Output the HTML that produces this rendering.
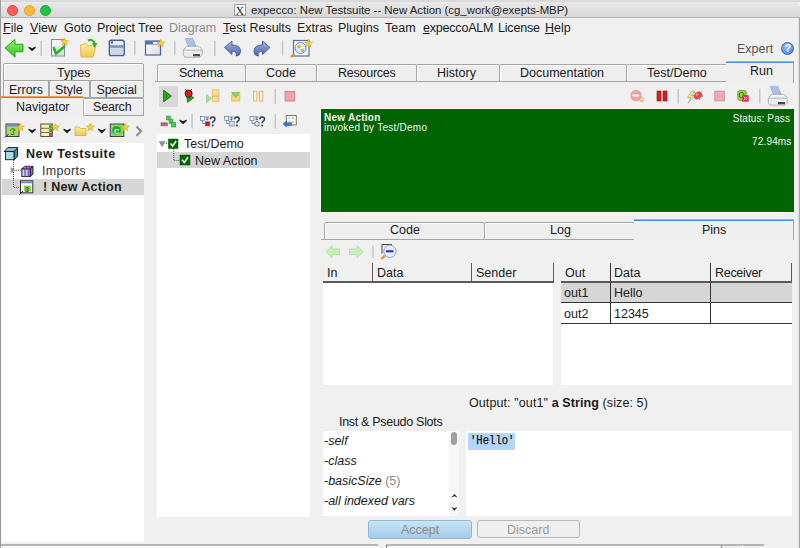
<!DOCTYPE html>
<html><head><meta charset="utf-8">
<style>
*{box-sizing:border-box;margin:0;padding:0}
html,body{width:800px;height:548px;overflow:hidden;background:#f0f0f0;font-family:"Liberation Sans",sans-serif;color:#1a1a1a}
.a{position:absolute}
.t{position:absolute;white-space:pre;line-height:1;font-size:12.5px}
.tab{position:absolute;background:#eeeeee;border:1px solid #a4a4a4;box-shadow:inset 1px 1px 0 #fff;border-radius:2px 2px 0 0}
.w{position:absolute;background:#fff}
svg{position:absolute;overflow:visible}
</style></head><body>
<!-- desktop strip -->
<div class="a" style="left:0;top:0;width:800px;height:2px;background:#dadada"></div>
<div class="a" style="left:0;top:0;width:1px;height:548px;background:#9c9c9c"></div>
<!-- title bar -->
<div class="a" style="left:1px;top:2px;width:799px;height:16px;background:linear-gradient(#e9e9e9,#d7d7d7);border-bottom:1px solid #b4b4b4;border-radius:5px 5px 0 0"></div>
<div class="a" style="left:7px;top:4.5px;width:11px;height:11px;border-radius:50%;background:#fd5c57;border:0.5px solid #e0443e"></div>
<div class="a" style="left:24px;top:4.5px;width:11px;height:11px;border-radius:50%;background:#feb935;border:0.5px solid #dea123"></div>
<div class="a" style="left:40px;top:4.5px;width:11px;height:11px;border-radius:50%;background:#1fc547;border:0.5px solid #1aab29"></div>
<div class="a" style="left:234px;top:4px;width:12px;height:12px;background:#fafafa;border:1px solid #a0a0a0"></div>
<div class="t" style="left:235.5px;top:4.5px;font-size:12px;font-family:'Liberation Serif',serif;color:#333">X</div>
<div class="t" style="left:251px;top:5px;font-size:11.4px;color:#222">expecco: New Testsuite -- New Action (cg_work@exepts-MBP)</div>

<!-- menu bar -->
<div class="t" style="left:3px;top:22px"><u>F</u>ile</div>
<div class="t" style="left:30px;top:22px"><u>V</u>iew</div>
<div class="t" style="left:64px;top:22px">Goto</div>
<div class="t" style="left:97px;top:22px;letter-spacing:-0.15px">Project Tree</div>
<div class="t" style="left:169px;top:22px;color:#8a8a8a">Diagram</div>
<div class="t" style="left:223px;top:22px"><u>T</u>est Results</div>
<div class="t" style="left:297px;top:22px">Extras</div>
<div class="t" style="left:338px;top:22px">Plugins</div>
<div class="t" style="left:385px;top:22px">Team</div>
<div class="t" style="left:423px;top:22px;letter-spacing:-0.2px"><u>e</u>xpeccoALM</div>
<div class="t" style="left:498px;top:22px;letter-spacing:-0.2px">License</div>
<div class="t" style="left:545px;top:22px"><u>H</u>elp</div>

<div class="t" style="left:737px;top:43px;color:#555">Expert</div>
<div class="a" style="left:781px;top:42px;width:13px;height:13px;border-radius:50%;background:radial-gradient(circle at 40% 35%,#9cc0f8,#3d74d8);border:0.5px solid #3366cc"></div>
<div class="t" style="left:784.5px;top:43px;font-size:11px;font-weight:bold;color:#fff">?</div>

<!-- left panel tabs -->
<div class="tab" style="left:3px;top:63px;width:141px;height:18px"></div>
<div class="t" style="left:57px;top:67px">Types</div>
<div class="tab" style="left:3px;top:80px;width:46px;height:18px"></div>
<div class="t" style="left:9px;top:84px">Errors</div>
<div class="tab" style="left:49px;top:80px;width:41px;height:18px"></div>
<div class="t" style="left:55px;top:84px">Style</div>
<div class="tab" style="left:90px;top:80px;width:54px;height:18px"></div>
<div class="t" style="left:96.5px;top:84px;letter-spacing:-0.1px">Special</div>
<div class="tab" style="left:83px;top:98px;width:61px;height:18px;border-left-color:#b0b0b0"></div>
<div class="t" style="left:93px;top:101px;letter-spacing:-0.2px">Search</div>
<div class="a" style="left:1px;top:96px;width:82px;height:21px;background:#efefef;border-top:1px solid #f4a050"></div>
<div class="a" style="left:1px;top:97px;width:82px;height:1px;background:#4a90d9"></div>
<div class="t" style="left:16px;top:101px">Navigator</div>

<!-- left white list -->
<div class="w" style="left:2px;top:143px;width:142px;height:399px"></div>
<div class="a" style="left:2px;top:179px;width:142px;height:16px;background:#d6d6d6"></div>
<div class="t" style="left:26px;top:148px;font-weight:bold;letter-spacing:0.5px">New Testsuite</div>
<div class="t" style="left:42px;top:165px;color:#333;letter-spacing:0.3px">Imports</div>
<div class="t" style="left:43px;top:181px;font-weight:bold;letter-spacing:0.3px">! New Action</div>

<!-- right tabs -->
<div class="a" style="left:155px;top:81px;width:571px;height:1px;background:#a4a4a4"></div>
<div class="tab" style="left:157px;top:64px;width:89px;height:18px"></div>
<div class="t" style="left:179px;top:67px;letter-spacing:-0.3px">Schema</div>
<div class="tab" style="left:245px;top:64px;width:72px;height:18px"></div>
<div class="t" style="left:266px;top:67px">Code</div>
<div class="tab" style="left:316px;top:64px;width:101px;height:18px"></div>
<div class="t" style="left:338px;top:67px;letter-spacing:-0.25px">Resources</div>
<div class="tab" style="left:416px;top:64px;width:84px;height:18px"></div>
<div class="t" style="left:437px;top:67px">History</div>
<div class="tab" style="left:499px;top:64px;width:128px;height:18px"></div>
<div class="t" style="left:520px;top:67px">Documentation</div>
<div class="tab" style="left:626px;top:64px;width:101px;height:18px"></div>
<div class="t" style="left:647px;top:67px">Test/Demo</div>
<div class="a" style="left:726px;top:61px;width:68px;height:22px;background:#efefef;border-top:1px solid #f4a050;border-right:1px solid #a4a4a4"></div>
<div class="a" style="left:726px;top:62px;width:67px;height:1px;background:#4a90d9"></div>
<div class="t" style="left:750px;top:65px">Run</div>

<!-- run button highlight -->
<div class="a" style="left:159px;top:86px;width:19px;height:21px;background:#d9d9d9"></div>

<!-- middle tree -->
<div class="w" style="left:157px;top:134px;width:153px;height:383px"></div>
<div class="a" style="left:157px;top:152px;width:153px;height:16px;background:#d6d6d6"></div>
<div class="t" style="left:184px;top:138px">Test/Demo</div>
<div class="t" style="left:195px;top:155px">New Action</div>

<!-- green panel -->
<div class="a" style="left:320px;top:108px;width:476px;height:105px;background:#fafafa"></div>
<div class="a" style="left:321px;top:109px;width:473px;height:103px;background:#006400"></div>
<div class="a" style="left:794px;top:108px;width:2px;height:104px;background:#f8f8f8"></div>
<div class="t" style="left:324px;top:113px;font-size:10px;font-weight:bold;color:#f4f8f4;letter-spacing:0.25px">New Action</div>
<div class="t" style="left:324px;top:123px;font-size:10px;color:#f4f8f4;letter-spacing:0.25px">invoked by Test/Demo</div>
<div class="t" style="right:10px;top:113.5px;font-size:10px;color:#f4f8f4;letter-spacing:0.1px">Status: Pass</div>
<div class="t" style="right:8.5px;top:137px;font-size:10px;color:#f4f8f4;letter-spacing:0.15px">72.94ms</div>

<!-- code/log/pins tabs -->
<div class="a" style="left:321px;top:239px;width:313px;height:1px;background:#a4a4a4"></div>
<div class="tab" style="left:324px;top:222px;width:161px;height:18px"></div>
<div class="t" style="left:390px;top:224px">Code</div>
<div class="tab" style="left:484px;top:222px;width:151px;height:18px"></div>
<div class="t" style="left:550px;top:224px">Log</div>
<div class="a" style="left:634px;top:219px;width:160px;height:21px;background:#efefef;border-top:1px solid #f4a050;border-right:1px solid #a4a4a4"></div>
<div class="a" style="left:634px;top:220px;width:159px;height:1px;background:#4a90d9"></div>
<div class="t" style="left:702px;top:224px">Pins</div>

<!-- in table -->
<div class="w" style="left:323px;top:281px;width:230px;height:104px"></div>
<div class="a" style="left:323px;top:281px;width:231px;height:2px;background:#5a5a5a"></div>
<div class="a" style="left:372px;top:263px;width:1px;height:18px;background:#5a5a5a"></div>
<div class="a" style="left:471px;top:263px;width:1px;height:18px;background:#5a5a5a"></div>
<div class="a" style="left:553px;top:263px;width:1px;height:18px;background:#5a5a5a"></div>
<div class="t" style="left:327px;top:267px">In</div>
<div class="t" style="left:377px;top:267px">Data</div>
<div class="t" style="left:476px;top:267px">Sender</div>

<!-- out table -->
<div class="w" style="left:561px;top:281px;width:231px;height:104px"></div>
<div class="a" style="left:561px;top:283px;width:231px;height:19px;background:#d6d6d6"></div>
<div class="a" style="left:561px;top:281px;width:231px;height:2px;background:#5a5a5a"></div>
<div class="a" style="left:561px;top:302px;width:231px;height:1px;background:#333"></div>
<div class="a" style="left:561px;top:323px;width:231px;height:1px;background:#333"></div>
<div class="a" style="left:610px;top:263px;width:1px;height:61px;background:#333"></div>
<div class="a" style="left:710px;top:263px;width:1px;height:61px;background:#333"></div>
<div class="a" style="left:791px;top:263px;width:1px;height:18px;background:#5a5a5a"></div>
<div class="t" style="left:565px;top:267px">Out</div>
<div class="t" style="left:614px;top:267px">Data</div>
<div class="t" style="left:715px;top:267px;letter-spacing:-0.3px">Receiver</div>
<div class="t" style="left:564px;top:287px">out1</div>
<div class="t" style="left:614px;top:287px">Hello</div>
<div class="t" style="left:564px;top:308px">out2</div>
<div class="t" style="left:614px;top:308px">12345</div>

<!-- output -->
<div class="t" style="left:469px;top:397px;letter-spacing:0.1px">Output: "out1" <b>a String</b> (size: 5)</div>
<div class="t" style="left:339px;top:416px;letter-spacing:-0.3px">Inst &amp; Pseudo Slots</div>
<div class="w" style="left:323px;top:431px;width:136px;height:85px"></div>
<div class="a" style="left:450.5px;top:431.5px;width:6.5px;height:13px;border-radius:3px;background:#a0a0a0"></div>
<div class="t" style="left:324px;top:435px;font-style:italic">-self</div>
<div class="t" style="left:324px;top:455px;font-style:italic">-class</div>
<div class="t" style="left:324px;top:475px;font-style:italic">-basicSize <span style="font-style:normal;color:#888">(5)</span></div>
<div class="t" style="left:324px;top:495px;font-style:italic">-all indexed vars</div>
<div class="w" style="left:466px;top:431px;width:326px;height:85px"></div>
<div class="a" style="left:468px;top:433px;width:47px;height:17px;background:#b4d6fc"></div>
<div class="t" style="left:469.5px;top:435.3px;font-size:12.3px;-webkit-text-stroke:0.25px #111;transform:scaleX(0.86);transform-origin:0 0;font-family:'Liberation Mono',monospace;color:#111">'Hello'</div>
<div class="a" style="left:449px;top:431px;width:10px;height:85px;background:#f7f7f7"></div>
<div class="a" style="left:450.5px;top:431.5px;width:6.5px;height:13px;border-radius:3px;background:#a0a0a0"></div>
<svg width="20" height="30" style="left:440px;top:490px"><path d="M11.3,7.4 L14.4,4 L17.5,7.4 L14.4,6.3 Z" fill="#222"/><path d="M11.3,17 L14.4,20.8 L17.5,17 L14.4,18.3 Z" fill="#222"/></svg>

<!-- buttons -->
<div class="a" style="left:368px;top:520px;width:104px;height:19px;border-radius:3px;background:linear-gradient(#c8e5f4,#a4cbec);border:1px solid #8fb7d8"></div>
<div class="t" style="left:401px;top:524px;color:#8a8a8a">Accept</div>
<div class="a" style="left:477px;top:520px;width:103px;height:18px;border-radius:3px;background:#efefef;border:1px solid #b8b8b8"></div>
<div class="t" style="left:507px;top:524px;color:#9a9a9a">Discard</div>

<!-- bottom strip -->
<div class="a" style="left:1px;top:544px;width:377px;height:2px;background:#b4b4b4"></div>
<div class="a" style="left:386px;top:544px;width:378px;height:2px;background:#b4b4b4"></div>
<div class="a" style="left:1px;top:546px;width:377px;height:2px;background:#fafafa"></div>
<div class="a" style="left:387px;top:546px;width:334px;height:2px;background:#fafafa"></div>
<div class="a" style="left:386px;top:545px;width:1px;height:3px;background:#777"></div>
<div class="a" style="left:721px;top:545px;width:1px;height:3px;background:#888"></div>
<div class="a" style="left:742px;top:545px;width:1px;height:3px;background:#fff"></div>
<!-- right window border -->
<div class="a" style="left:798px;top:18px;width:1px;height:530px;background:#dedede"></div>
<div class="a" style="left:799px;top:18px;width:1px;height:530px;background:#a8a8a8"></div>
<svg width="800" height="548" style="left:0;top:0" viewBox="0 0 800 548">
<defs>
<linearGradient id="gA" x1="0" y1="0" x2="0" y2="1"><stop offset="0" stop-color="#8ef27a"/><stop offset="1" stop-color="#2fc21a"/></linearGradient>
<linearGradient id="gBlue" x1="0" y1="0" x2="0" y2="1"><stop offset="0" stop-color="#9fb3e0"/><stop offset="1" stop-color="#4d67ad"/></linearGradient>
<linearGradient id="gFold" x1="0" y1="0" x2="0" y2="1"><stop offset="0" stop-color="#fff2a0"/><stop offset="1" stop-color="#f0c850"/></linearGradient>
<linearGradient id="gPage" x1="0" y1="0" x2="1" y2="1"><stop offset="0" stop-color="#ffffff"/><stop offset="1" stop-color="#d8dbe6"/></linearGradient>
<linearGradient id="gPrint" x1="0" y1="0" x2="0" y2="1"><stop offset="0" stop-color="#f4f4f4"/><stop offset="1" stop-color="#b8b8b8"/></linearGradient>


</defs>
<!-- ==== main toolbar ==== -->
<path d="M5,48 L15,39.5 L15,44.3 L23,44.3 L23,51.7 L15,51.7 L15,57 Z" fill="url(#gA)" stroke="#1fa70f" stroke-width="1"/>
<g transform="translate(28.8,46.5)"><path d="M-0.3,0 L3.3,1.7 L6.9,0 L6.9,1.4 L3.3,4.8 L-0.3,1.4 Z" fill="#1a1a1a"/></g>
<rect x="40.5" y="41" width="1.5" height="15" fill="#c6c6c6"/>
<rect x="51.5" y="39.5" width="13" height="16.5" fill="url(#gPage)" stroke="#7d8aa5" stroke-width="1"/>
<path d="M53.5,47 L56,53.5 L65,46" fill="none" stroke="#22b81a" stroke-width="2.6"/>
<g transform="translate(64.5,41.8)"><path d="M0,-4 L1.1,-1.3 L3.9,-1.2 L1.7,0.6 L2.4,3.4 L0,1.8 L-2.4,3.4 L-1.7,0.6 L-3.9,-1.2 L-1.1,-1.3Z" fill="#f7d23c" stroke="#d9a520" stroke-width="0.6"/></g>
<path d="M80.5,45 L86,43.5 L88,46 L96,45.5 L93,57 L81,57 Z" fill="url(#gFold)" stroke="#d8a830" stroke-width="0.8"/>
<path d="M88,40.5 Q93,38.5 95,44" fill="none" stroke="#3cb02c" stroke-width="2.2"/>
<path d="M92,43 L97.5,43 L94.5,48 Z" fill="#3cb02c"/>
<rect x="109.4" y="40.3" width="14.8" height="15.2" rx="1.8" fill="#e6eaf4" stroke="#4d5f9f" stroke-width="1.5"/>
<rect x="110.2" y="45.2" width="13.2" height="2.6" fill="#7f8fc2"/>
<rect x="110.5" y="48" width="12.6" height="6.5" fill="#d0d8ea"/>
<rect x="111" y="41.5" width="2" height="1.8" fill="#3b4f98"/>
<rect x="134" y="41" width="1.5" height="14.5" fill="#c6c6c6"/>
<rect x="145.5" y="41" width="15" height="14" fill="url(#gPage)" stroke="#4d62a6" stroke-width="1.2"/>
<rect x="145.5" y="41" width="15" height="3.5" fill="#5a70b0"/>
<rect x="153" y="42" width="5" height="1.8" fill="#fff"/>
<g transform="translate(160.8,43.3)"><path d="M0,-4 L1.1,-1.3 L3.9,-1.2 L1.7,0.6 L2.4,3.4 L0,1.8 L-2.4,3.4 L-1.7,0.6 L-3.9,-1.2 L-1.1,-1.3Z" fill="#f7d23c" stroke="#d9a520" stroke-width="0.6"/></g>
<rect x="174" y="40.5" width="1.5" height="15" fill="#c6c6c6"/>
<g transform="translate(-585,-48)">
<path d="M770.2,86.4 L777.8,86.4 L781,94 L773.6,94.8 Z" fill="#a9c0ee" stroke="#8aa2d6" stroke-width="0.6"/>
<path d="M768.3,98 L771.5,94.3 L784,94.3 L787.2,97.5 L787.2,103 L785,105.2 L770,105.2 L768.3,103 Z" fill="#ececec" stroke="#9a9a9a" stroke-width="0.7"/>
<path d="M768.6,98.2 L787,98.2" stroke="#b0b0b0" stroke-width="0.8"/>
<path d="M771.5,95.8 L784,95.8" stroke="#ffffff" stroke-width="1"/>
<rect x="778" y="102" width="7" height="2.3" fill="#4a4a4a"/>
</g>
<rect x="214" y="41" width="1.5" height="15" fill="#c6c6c6"/>
<path d="M224.5,47.5 L232,41 L232,45 Q241,45 240.5,52 Q240,56 236,56 Q238,52 232,51 L232,54.5 Z" fill="url(#gBlue)" stroke="#3d508f" stroke-width="0.8"/>
<path d="M270,47.5 L262.5,41 L262.5,45 Q253.5,45 254,52 Q254.5,56 258.5,56 Q256.5,52 262.5,51 L262.5,54.5 Z" fill="url(#gBlue)" stroke="#3d508f" stroke-width="0.8"/>
<rect x="281.8" y="40.5" width="1.5" height="15" fill="#c6c6c6"/>
<rect x="293.5" y="40.5" width="15.5" height="15.5" fill="#f4f6fb" stroke="#5a6ea8" stroke-width="1.2"/>
<circle cx="300.5" cy="48" r="5.5" fill="#d6eefa" stroke="#6e8cc4" stroke-width="1"/>
<rect x="297.5" y="45" width="3" height="3" fill="#f0b800"/>
<rect x="301" y="49" width="3" height="3" fill="#f0b800"/>
<path d="M291,57 L294.5,53.5" stroke="#f08a20" stroke-width="2.2"/>
<g transform="translate(308.5,43.3)"><path d="M0,-4 L1.1,-1.3 L3.9,-1.2 L1.7,0.6 L2.4,3.4 L0,1.8 L-2.4,3.4 L-1.7,0.6 L-3.9,-1.2 L-1.1,-1.3Z" fill="#f7d23c" stroke="#d9a520" stroke-width="0.6"/></g>
<!-- ==== run toolbar ==== -->
<path d="M163.5,90 L171.5,96 L163.5,102 Z" fill="#30a020" stroke="#1c6d14" stroke-width="0.8"/>
<path d="M186.5,95 L194,97.5 L187.5,102.5 Z" fill="#2a9a1e" stroke="#1c6d14" stroke-width="0.7"/>
<circle cx="188.6" cy="93.6" r="3.6" fill="#e01818" stroke="#222" stroke-width="0.8"/>
<path d="M185,89 L187,91 M192,89 L190,91" stroke="#222" stroke-width="0.8"/>
<path d="M206.5,94.5 L211.5,98.5 L206.5,102.8 Z" fill="#a8e090" stroke="#80c070" stroke-width="0.6"/>
<rect x="212.5" y="89.8" width="6.4" height="5.3" fill="#ffe08a" stroke="#e0a868" stroke-width="0.7"/>
<rect x="212.5" y="96.2" width="6.4" height="5.3" fill="#ffe08a" stroke="#e0a868" stroke-width="0.7"/>
<rect x="231.8" y="95" width="8" height="6" fill="#ffd880" stroke="#d8a860" stroke-width="0.7"/>
<path d="M231.5,92.4 L240,92.4 L235.8,97.5 Z" fill="#80d860" stroke="#60b040" stroke-width="0.6"/>
<rect x="253.5" y="91.2" width="3.4" height="9.8" fill="#fff4c8" stroke="#e0a060" stroke-width="0.8"/>
<rect x="259.4" y="91.2" width="3.4" height="9.8" fill="#fff4c8" stroke="#e0a060" stroke-width="0.8"/>
<rect x="274.5" y="89" width="1.5" height="15" fill="#c6c6c6"/>
<rect x="285" y="91.5" width="9.8" height="9.5" fill="#f2a2ac" stroke="#c08890" stroke-width="0.9"/>
<!-- right run icons -->
<circle cx="636" cy="95.5" r="5.4" fill="#f2a0a0" stroke="#e89090" stroke-width="0.5"/>
<rect x="632.5" y="94.5" width="6.5" height="2" fill="#fff"/>
<path d="M639.5,98.3 L641.8,96.5 L644.1,98.3 Z M639.5,100.3 L641.8,102.1 L644.1,100.3 Z" fill="#e0d090" stroke="#b8a860" stroke-width="0.5"/>
<rect x="657" y="91" width="4" height="10" fill="#d42020" stroke="#901010" stroke-width="0.6"/>
<rect x="663" y="91" width="4" height="10" fill="#d42020" stroke="#901010" stroke-width="0.6"/>
<rect x="677.5" y="89" width="1.5" height="14.5" fill="#c6c6c6"/>
<path d="M692,91 L687.5,97.5 L691,97.5 L688,103 L695,95.5 L691.5,95.5 L694.5,91 Z" fill="#f8ec80" stroke="#a0a060" stroke-width="0.6"/>
<path d="M694,92 L696,93.5 M701.5,91.5 L700,93 M703,96 L701.5,96 M695,99.5 L696.5,98 M700,100 L699.5,98.5" stroke="#707070" stroke-width="0.8"/>
<ellipse cx="698" cy="95.5" rx="4.2" ry="3.2" transform="rotate(-35 698 95.5)" fill="#e84a4a" stroke="#9a5050" stroke-width="0.6"/>
<ellipse cx="697" cy="94.5" rx="1.5" ry="1" fill="#f8a0a0"/>
<rect x="714.8" y="91.3" width="9.5" height="9.5" fill="#f6a6ae" stroke="#c0a0a4" stroke-width="1.1"/>
<rect x="737.8" y="90.6" width="8.5" height="9.8" rx="2" fill="#8ad848" stroke="#58a028" stroke-width="0.8"/>
<circle cx="741.5" cy="95" r="2.5" fill="none" stroke="#3a7018" stroke-width="1"/>
<rect x="742.2" y="95.2" width="6.5" height="6.5" fill="#e03030"/>
<path d="M743.8,96.8 L747.2,100.2 M747.2,96.8 L743.8,100.2" stroke="#fff" stroke-width="1"/>
<rect x="759" y="88.7" width="1.5" height="14.7" fill="#c6c6c6"/>
<g>
<path d="M770.2,86.4 L777.8,86.4 L781,94 L773.6,94.8 Z" fill="#a9c0ee" stroke="#8aa2d6" stroke-width="0.6"/>
<path d="M768.3,98 L771.5,94.3 L784,94.3 L787.2,97.5 L787.2,103 L785,105.2 L770,105.2 L768.3,103 Z" fill="#ececec" stroke="#9a9a9a" stroke-width="0.7"/>
<path d="M768.6,98.2 L787,98.2" stroke="#b0b0b0" stroke-width="0.8"/>
<path d="M771.5,95.8 L784,95.8" stroke="#ffffff" stroke-width="1"/>
<rect x="778" y="102" width="7" height="2.3" fill="#4a4a4a"/>
</g>
<!-- ==== middle tree toolbar ==== -->
<rect x="161" y="122.8" width="6.4" height="3" fill="#e05050" stroke="#606890" stroke-width="0.6"/>
<rect x="166.5" y="116" width="4" height="4" fill="#40d040" stroke="#308830" stroke-width="0.5"/>
<rect x="169" y="119.3" width="4" height="4" fill="#40d040" stroke="#308830" stroke-width="0.5"/>
<rect x="171.3" y="122.5" width="4.5" height="4.5" fill="#40d040" stroke="#308830" stroke-width="0.5"/>
<g transform="translate(179.8,119.5)"><path d="M-0.3,0 L3.3,1.7 L6.9,0 L6.9,1.4 L3.3,4.8 L-0.3,1.4 Z" fill="#1a1a1a"/></g>
<rect x="191.3" y="114" width="1.5" height="14.5" fill="#c6c6c6"/>
<g>
<rect x="200.5" y="116.3" width="4" height="4" fill="#fff" stroke="#5070a0" stroke-width="0.7"/>
<path d="M202.5,120.5 L202.5,123.5 L205,123.5" fill="none" stroke="#5070a0" stroke-width="0.7"/>
<path d="M205.5,117 L209,117 M207.2,117.5 L207.2,120 M205.8,118.8 L207.2,120.2 L208.6,118.8" fill="none" stroke="#405080" stroke-width="0.8"/>
<path d="M210.4,119.3 Q210.4,116.9 212.7,116.9 Q215,116.9 215,119.1 Q215,120.6 213.4,121.4 Q212.7,121.8 212.7,123.3" fill="none" stroke="#2a3a5a" stroke-width="1.5"/><rect x="211.9" y="124.6" width="1.7" height="1.8" fill="#2a3a5a"/>
</g>
<rect x="205" y="121.5" width="5" height="4.5" fill="#e01010" stroke="#a0a0b0" stroke-width="0.6"/>
<g transform="translate(24.2,0)">
<rect x="200.5" y="116.3" width="4" height="4" fill="#fff" stroke="#5070a0" stroke-width="0.7"/>
<path d="M202.5,120.5 L202.5,123.5 L205,123.5" fill="none" stroke="#5070a0" stroke-width="0.7"/>
<path d="M205.5,117 L209,117 M207.2,117.5 L207.2,120 M205.8,118.8 L207.2,120.2 L208.6,118.8" fill="none" stroke="#405080" stroke-width="0.8"/>
<path d="M210.4,119.3 Q210.4,116.9 212.7,116.9 Q215,116.9 215,119.1 Q215,120.6 213.4,121.4 Q212.7,121.8 212.7,123.3" fill="none" stroke="#2a3a5a" stroke-width="1.5"/><rect x="211.9" y="124.6" width="1.7" height="1.8" fill="#2a3a5a"/>
</g>
<rect x="229.2" y="121.5" width="5" height="4.5" fill="#d8dce8" stroke="#6070a0" stroke-width="0.6"/>
<g transform="translate(49.5,0)">
<rect x="200.5" y="116.3" width="4" height="4" fill="#fff" stroke="#5070a0" stroke-width="0.7"/>
<path d="M202.5,120.5 L202.5,123.5 L205,123.5" fill="none" stroke="#5070a0" stroke-width="0.7"/>
<path d="M205.5,117 L209,117 M207.2,117.5 L207.2,120 M205.8,118.8 L207.2,120.2 L208.6,118.8" fill="none" stroke="#405080" stroke-width="0.8"/>
<path d="M210.4,119.3 Q210.4,116.9 212.7,116.9 Q215,116.9 215,119.1 Q215,120.6 213.4,121.4 Q212.7,121.8 212.7,123.3" fill="none" stroke="#2a3a5a" stroke-width="1.5"/><rect x="211.9" y="124.6" width="1.7" height="1.8" fill="#2a3a5a"/>
</g>
<circle cx="257" cy="123.8" r="2.3" fill="none" stroke="#405080" stroke-width="0.8"/>
<rect x="274.5" y="114" width="1.5" height="14.5" fill="#c6c6c6"/>
<rect x="286.3" y="115.5" width="10" height="9.5" fill="#f6f6f0" stroke="#807860" stroke-width="1"/>
<path d="M288.5,118 L290.5,118 M292,118 L294,118 M288.5,122 L290.5,122 M292,122 L294,122" stroke="#888" stroke-width="0.8"/>
<path d="M283,124 L286.5,121 L286.5,122.8 L291.5,122.8 L291.5,125.3 L286.5,125.3 L286.5,127 Z" fill="#3a78e0" stroke="#2050b0" stroke-width="0.5"/>
<!-- ==== left panel toolbar ==== -->
<rect x="6" y="124" width="13" height="12.5" fill="#a8d860" stroke="#404040" stroke-width="1"/>
<rect x="6.5" y="124.5" width="12" height="2" fill="#6a90d8"/>
<path d="M10,131 Q12.5,127 15,130 Q12,131 14,134 Q12,135.5 10.5,133.5" fill="none" stroke="#4a8a20" stroke-width="1.2"/>
<path d="M5,137.5 L8.5,134" stroke="#222" stroke-width="1"/>
<g transform="translate(20.5,127.5)"><path d="M0,-4 L1.1,-1.3 L3.9,-1.2 L1.7,0.6 L2.4,3.4 L0,1.8 L-2.4,3.4 L-1.7,0.6 L-3.9,-1.2 L-1.1,-1.3Z" fill="#f7d23c" stroke="#d9a520" stroke-width="0.6"/></g>
<g transform="translate(28.8,128.5)"><path d="M-0.3,0 L3.3,1.7 L6.9,0 L6.9,1.4 L3.3,4.8 L-0.3,1.4 Z" fill="#1a1a1a"/></g>
<rect x="40.8" y="124" width="11.5" height="12.5" fill="#f8f0a0" stroke="#505050" stroke-width="1"/>
<path d="M41,128.3 L49,128.3 M41,132.5 L49,132.5" stroke="#505050" stroke-width="0.8"/>
<rect x="49" y="124.5" width="3" height="3.8" fill="#30b040"/>
<rect x="49" y="128.5" width="3" height="3.8" fill="#30b040"/>
<rect x="49" y="132.5" width="3" height="3.8" fill="#e04040"/>
<g transform="translate(55.5,127.3)"><path d="M0,-4 L1.1,-1.3 L3.9,-1.2 L1.7,0.6 L2.4,3.4 L0,1.8 L-2.4,3.4 L-1.7,0.6 L-3.9,-1.2 L-1.1,-1.3Z" fill="#f7d23c" stroke="#d9a520" stroke-width="0.6"/></g>
<g transform="translate(63.8,128.5)"><path d="M-0.3,0 L3.3,1.7 L6.9,0 L6.9,1.4 L3.3,4.8 L-0.3,1.4 Z" fill="#1a1a1a"/></g>
<path d="M75,127 L79,127 L80.5,128.5 L86,128.5 L86,135.5 L75,135.5 Z" fill="url(#gFold)" stroke="#d8a830" stroke-width="0.8"/>
<g transform="translate(90.3,127.3)"><path d="M0,-4 L1.1,-1.3 L3.9,-1.2 L1.7,0.6 L2.4,3.4 L0,1.8 L-2.4,3.4 L-1.7,0.6 L-3.9,-1.2 L-1.1,-1.3Z" fill="#f7d23c" stroke="#d9a520" stroke-width="0.6"/></g>
<g transform="translate(98.5,128.6)"><path d="M-0.3,0 L3.3,1.7 L6.9,0 L6.9,1.4 L3.3,4.8 L-0.3,1.4 Z" fill="#1a1a1a"/></g>
<rect x="110.3" y="124" width="13.5" height="12.5" fill="#90e060" stroke="#404040" stroke-width="1"/>
<path d="M110.5,128 L123.5,128 M110.5,132.5 L123.5,132.5 M114,124 L114,136.5 M120,124 L120,136.5" stroke="#70b040" stroke-width="0.6"/>
<circle cx="116.5" cy="130.3" r="4.3" fill="#10b030"/>
<text x="114" y="133.5" font-size="7" font-weight="bold" fill="#fff" font-family="Liberation Sans">C</text>
<g transform="translate(125.3,127.3)"><path d="M0,-4 L1.1,-1.3 L3.9,-1.2 L1.7,0.6 L2.4,3.4 L0,1.8 L-2.4,3.4 L-1.7,0.6 L-3.9,-1.2 L-1.1,-1.3Z" fill="#f7d23c" stroke="#d9a520" stroke-width="0.6"/></g>
<path d="M136.5,126.5 L141,131.2 L136.5,135.8" fill="none" stroke="#8a8a8a" stroke-width="2"/>
<!-- ==== left tree ==== -->
<path d="M13.5,160 L13.5,187.5 L19.5,187.5" fill="none" stroke="#555" stroke-width="1" stroke-dasharray="1,1"/>
<path d="M16,170.2 L21,170.2" fill="none" stroke="#555" stroke-width="1" stroke-dasharray="1,1"/>
<path d="M14,151.5 L17.5,148.3 L17.5,156.5 L14,159.7 Z" fill="#4f8f9c" stroke="#1a1a1a" stroke-width="0.9"/>
<rect x="5.5" y="151.5" width="8.5" height="8.2" fill="#a8dbe6" stroke="#1a1a1a" stroke-width="0.9"/>
<path d="M4.2,151.5 L7.8,147.5 L17.8,147.5 L14.2,151.5 Z" fill="#7fc0cc" stroke="#1a1a1a" stroke-width="0.9"/>

<path d="M10.6,166.8 L16,170.2 L10.6,173.6 Z" fill="#9c9c9c"/>
<path d="M30,168.8 L33,166.3 L33,174 L30,176.6 Z" fill="#4f8f9c" stroke="#1a1a1a" stroke-width="0.9"/>
<rect x="21.8" y="168.8" width="8.2" height="7.8" fill="#a8dbe6" stroke="#1a1a1a" stroke-width="0.9"/>
<path d="M21.8,168.8 L24.8,166.3 L33,166.3 L30,168.8 Z" fill="#7fc0cc" stroke="#1a1a1a" stroke-width="0.9"/>
<path d="M25,168.5 L25,176.5 M28.2,168.5 L28.2,176.5 M25,168.5 L28,166.3 M28.2,168.5 L31,166.3" fill="none" stroke="#b020c0" stroke-width="1.1"/>
<rect x="20.5" y="180.8" width="12.3" height="12" fill="#fff" stroke="#303030" stroke-width="1"/>
<rect x="21" y="181.3" width="11.3" height="2" fill="#7090d0"/>
<rect x="24" y="185.5" width="7" height="6" fill="#90d050"/>
<text x="25" y="191.5" font-size="7" font-weight="bold" fill="#306010" font-family="Liberation Sans">3</text>
<path d="M19.5,194.5 L23,191" stroke="#222" stroke-width="1"/>
<!-- ==== middle tree ==== -->
<path d="M158.6,141.2 L165.9,141.2 L162.2,147.2 Z" fill="#909090"/>
<path d="M166,143.5 L168.5,143.5" stroke="#555" stroke-width="1" stroke-dasharray="1,1"/>
<path d="M173.8,149 L173.8,160.5 L180,160.5" fill="none" stroke="#555" stroke-width="1" stroke-dasharray="1,1"/>
<rect x="168.5" y="139" width="9.5" height="9.5" fill="#006a00" stroke="#004d00" stroke-width="0.5"/>
<path d="M170.5,143.5 L172.7,146 L176.2,141" fill="none" stroke="#fff" stroke-width="1.5"/>
<rect x="180" y="155" width="10" height="10" fill="#006a00" stroke="#004d00" stroke-width="0.5"/>
<path d="M182,159.8 L184.3,162.5 L188,157.2" fill="none" stroke="#fff" stroke-width="1.5"/>
<!-- ==== pins toolbar ==== -->
<path d="M326,251.7 L332,245.5 L332,249 L339.5,249 L339.5,254.5 L332,254.5 L332,258 Z" fill="#c6f0b8" stroke="#a8e098" stroke-width="0.8"/>
<path d="M363,251.7 L357,245.5 L357,249 L349.5,249 L349.5,254.5 L357,254.5 L357,258 Z" fill="#c6f0b8" stroke="#a8e098" stroke-width="0.8"/>
<rect x="372.2" y="245.5" width="1.5" height="12.5" fill="#c6c6c6"/>
<path d="M382,253.5 L382,244.5 L392,244.5" fill="none" stroke="#333" stroke-width="0.9"/>
<circle cx="390" cy="251.3" r="6.2" fill="#e4f0fa" stroke="#90a8c8" stroke-width="1"/>
<rect x="386" y="250.3" width="7.5" height="2" fill="#2020e0"/>
<path d="M381.5,259 L385,255.5" stroke="#f09030" stroke-width="2.4"/>
</svg>
</body></html>
